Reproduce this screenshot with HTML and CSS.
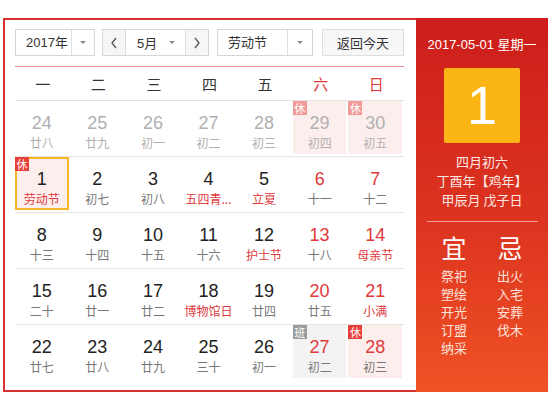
FILE: index.html
```html
<!DOCTYPE html>
<html lang="zh-CN">
<head>
<meta charset="utf-8">
<title>万年历</title>
<link rel="stylesheet" href="styles.css">
</head>
<body>
<div class="page">
  <div class="cal">
    <div class="main">
      <div class="toolbar">
        <div class="select year"><span class="val">2017年</span><span class="arrow"><i class="tri"></i></span></div>
        <div class="monthgrp">
          <span class="nav"><svg width="8" height="12" viewBox="0 0 8 12"><polyline points="6,1 2,6 6,11" fill="none" stroke="#555" stroke-width="1.3"/></svg></span>
          <span class="mval"><span>5月</span><i class="tri"></i></span>
          <span class="nav"><svg width="8" height="12" viewBox="0 0 8 12"><polyline points="2,1 6,6 2,11" fill="none" stroke="#555" stroke-width="1.3"/></svg></span>
        </div>
        <div class="select holiday"><span class="val">劳动节</span><span class="arrow"><i class="tri"></i></span></div>
        <div class="today">返回今天</div>
      </div>
      <div class="weekhead">
        <span>一</span><span>二</span><span>三</span><span>四</span><span>五</span><span class="wk">六</span><span class="wk">日</span>
      </div>
      <div class="week">
        <div class="day other"><div class="num">24</div><div class="lunar">廿八</div></div>
        <div class="day other"><div class="num">25</div><div class="lunar">廿九</div></div>
        <div class="day other"><div class="num">26</div><div class="lunar">初一</div></div>
        <div class="day other"><div class="num">27</div><div class="lunar">初二</div></div>
        <div class="day other"><div class="num">28</div><div class="lunar">初三</div></div>
        <div class="day other rest"><span class="badge">休</span><div class="num">29</div><div class="lunar">初四</div></div>
        <div class="day other rest"><span class="badge">休</span><div class="num">30</div><div class="lunar">初五</div></div>
      </div>
      <div class="week">
        <div class="day rest selected"><span class="badge">休</span><div class="num">1</div><div class="lunar fest">劳动节</div></div>
        <div class="day"><div class="num">2</div><div class="lunar">初七</div></div>
        <div class="day"><div class="num">3</div><div class="lunar">初八</div></div>
        <div class="day"><div class="num">4</div><div class="lunar fest">五四青...</div></div>
        <div class="day"><div class="num">5</div><div class="lunar fest">立夏</div></div>
        <div class="day wkd"><div class="num">6</div><div class="lunar">十一</div></div>
        <div class="day wkd"><div class="num">7</div><div class="lunar">十二</div></div>
      </div>
      <div class="week">
        <div class="day"><div class="num">8</div><div class="lunar">十三</div></div>
        <div class="day"><div class="num">9</div><div class="lunar">十四</div></div>
        <div class="day"><div class="num">10</div><div class="lunar">十五</div></div>
        <div class="day"><div class="num">11</div><div class="lunar">十六</div></div>
        <div class="day"><div class="num">12</div><div class="lunar fest">护士节</div></div>
        <div class="day wkd"><div class="num">13</div><div class="lunar">十八</div></div>
        <div class="day wkd"><div class="num">14</div><div class="lunar fest">母亲节</div></div>
      </div>
      <div class="week">
        <div class="day"><div class="num">15</div><div class="lunar">二十</div></div>
        <div class="day"><div class="num">16</div><div class="lunar">廿一</div></div>
        <div class="day"><div class="num">17</div><div class="lunar">廿二</div></div>
        <div class="day"><div class="num">18</div><div class="lunar fest">博物馆日</div></div>
        <div class="day"><div class="num">19</div><div class="lunar">廿四</div></div>
        <div class="day wkd"><div class="num">20</div><div class="lunar">廿五</div></div>
        <div class="day wkd"><div class="num">21</div><div class="lunar fest">小满</div></div>
      </div>
      <div class="week last">
        <div class="day"><div class="num">22</div><div class="lunar">廿七</div></div>
        <div class="day"><div class="num">23</div><div class="lunar">廿八</div></div>
        <div class="day"><div class="num">24</div><div class="lunar">廿九</div></div>
        <div class="day"><div class="num">25</div><div class="lunar">三十</div></div>
        <div class="day"><div class="num">26</div><div class="lunar">初一</div></div>
        <div class="day wkd work"><span class="badge">班</span><div class="num">27</div><div class="lunar">初二</div></div>
        <div class="day wkd rest"><span class="badge">休</span><div class="num">28</div><div class="lunar">初三</div></div>
      </div>
    </div>
    <div class="side">
      <div class="sdate">2017-05-01 星期一</div>
      <div class="bigday">1</div>
      <div class="slunar">
        <div>四月初六</div>
        <div>丁酉年【鸡年】</div>
        <div>甲辰月 戊子日</div>
      </div>
      <div class="sep"></div>
      <div class="yiji">
        <div class="col">
          <div class="head">宜</div>
          <div>祭祀</div><div>塑绘</div><div>开光</div><div>订盟</div><div>纳采</div>
        </div>
        <div class="col">
          <div class="head">忌</div>
          <div>出火</div><div>入宅</div><div>安葬</div><div>伐木</div>
        </div>
      </div>
    </div>
  </div>
</div>
</body>
</html>
```

FILE: styles.css
```css
html, body {
  margin: 0;
  padding: 0;
  background: #fff;
}
body {
  font-family: "Liberation Sans", "Noto Sans CJK SC", sans-serif;
  color: #333;
}
.page {
  padding: 18px 0 0 3px;
}
.cal {
  display: flex;
  width: 545px;
  height: 374px;
}
.main {
  width: 389px;
  height: 361px;
  border: 2px solid #d63232;
  border-right: none;
  padding: 9px 12px 0 10px;
}
.toolbar {
  display: flex;
  height: 27px;
  font-size: 13px;
}
.select, .monthgrp, .today {
  box-sizing: border-box;
  height: 27px;
  border: 1px solid #d6d6d6;
  display: flex;
  align-items: center;
  background: #fff;
}
.year { width: 80px; }
.holiday { width: 96px; margin-left: 8px; }
.val {
  flex: 1;
  padding-left: 10px;
  line-height: 25px;
}
.arrow {
  width: 22px;
  height: 25px;
  border-left: 1px solid #e0e0e0;
  display: flex;
  align-items: center;
  justify-content: center;
}
.holiday .arrow { width: 24px; }
.tri {
  display: block;
  width: 0;
  height: 0;
  border-left: 3px solid transparent;
  border-right: 3px solid transparent;
  border-top: 3px solid #888;
}
.monthgrp {
  width: 107px;
  margin-left: 7px;
}
.nav {
  width: 22px;
  height: 25px;
  background: #f6f6f6;
  display: flex;
  align-items: center;
  justify-content: center;
}
.nav:first-child { border-right: 1px solid #dcdcdc; }
.nav:last-child { border-left: 1px solid #dcdcdc; }
.mval {
  flex: 1;
  display: flex;
  align-items: center;
  justify-content: space-between;
  padding: 0 10px 0 11px;
}
.today {
  width: 82px;
  margin-left: 9px;
  justify-content: center;
  background: #f7f7f7;
  border-color: #dedede;
}
.weekhead {
  margin-top: 10px;
  border-top: 1px solid #f08a8a;
  border-bottom: 1px solid #e2e2e2;
  height: 33px;
  display: grid;
  grid-template-columns: repeat(7, 1fr);
  align-items: center;
  text-align: center;
  font-size: 15px;
  font-family: "Noto Sans CJK SC", sans-serif;
  color: #333;
}
.weekhead .wk { color: #e0393c; }
.week {
  display: grid;
  grid-template-columns: repeat(7, 1fr);
  height: 55px;
  border-bottom: 1px solid #e4e4e4;
}
.week.last { border-bottom: none; }
.day {
  position: relative;
  margin: 0 2px 2px 0;
  box-sizing: border-box;
  padding-top: 11px;
  text-align: center;
}
.num {
  font-size: 18px;
  line-height: 22px;
  color: #222;
}
.lunar {
  font-family: "Noto Sans CJK SC", sans-serif;
  font-size: 12px;
  line-height: 18px;
  color: #777;
  white-space: nowrap;
}
.lunar.fest { color: #e0393c; }
.wkd .num { color: #e0393c; }
.other .num, .other .lunar { color: #b0b0b0; }
.rest { background: #fdeeee; }
.work { background: #f3f3f3; }
.badge {
  position: absolute;
  left: 0;
  top: 0;
  width: 14px;
  height: 14px;
  line-height: 14px;
  font-size: 11px;
  font-family: "Noto Sans CJK SC", sans-serif;
  color: #fff;
  background: #e8413b;
  text-align: center;
}
.other .badge { background: #f19b98; }
.work .badge { background: #9a9a9a; }
.selected {
  border: 2px solid #f5b526;
  padding-top: 9px;
}
.selected .badge { left: -2px; top: -2px; }
.side {
  width: 132px;
  height: 374px;
  background: linear-gradient(180deg, #cd1e1b 0%, #dc3420 55%, #f05224 100%);
  color: #fff;
  display: flex;
  flex-direction: column;
  align-items: center;
  padding-top: 18px;
  box-sizing: border-box;
}
.sdate {
  font-size: 13px;
  line-height: 18px;
  font-family: "Liberation Sans", "Noto Sans CJK SC", sans-serif;
}
.bigday {
  margin-top: 14px;
  width: 76px;
  height: 75px;
  background: #fbb515;
  border-radius: 2px;
  font-size: 54px;
  line-height: 75px;
  text-align: center;
  color: #fff;
}
.slunar {
  margin-top: 9px;
  font-family: "Noto Sans CJK SC", sans-serif;
  font-size: 13px;
  line-height: 19px;
  text-align: center;
  color: #fde9e4;
}
.sep {
  margin-top: 12px;
  width: 111px;
  height: 1px;
  background: rgba(255, 255, 255, 0.55);
}
.yiji {
  display: grid;
  grid-template-columns: 56px 56px;
  margin-top: 10px;
  font-family: "Noto Sans CJK SC", sans-serif;
  font-size: 13px;
  line-height: 18px;
  text-align: center;
  color: #fde3dc;
}
.yiji .head {
  font-size: 25px;
  line-height: 30px;
  color: #fff;
  margin-bottom: 5px;
}
```
